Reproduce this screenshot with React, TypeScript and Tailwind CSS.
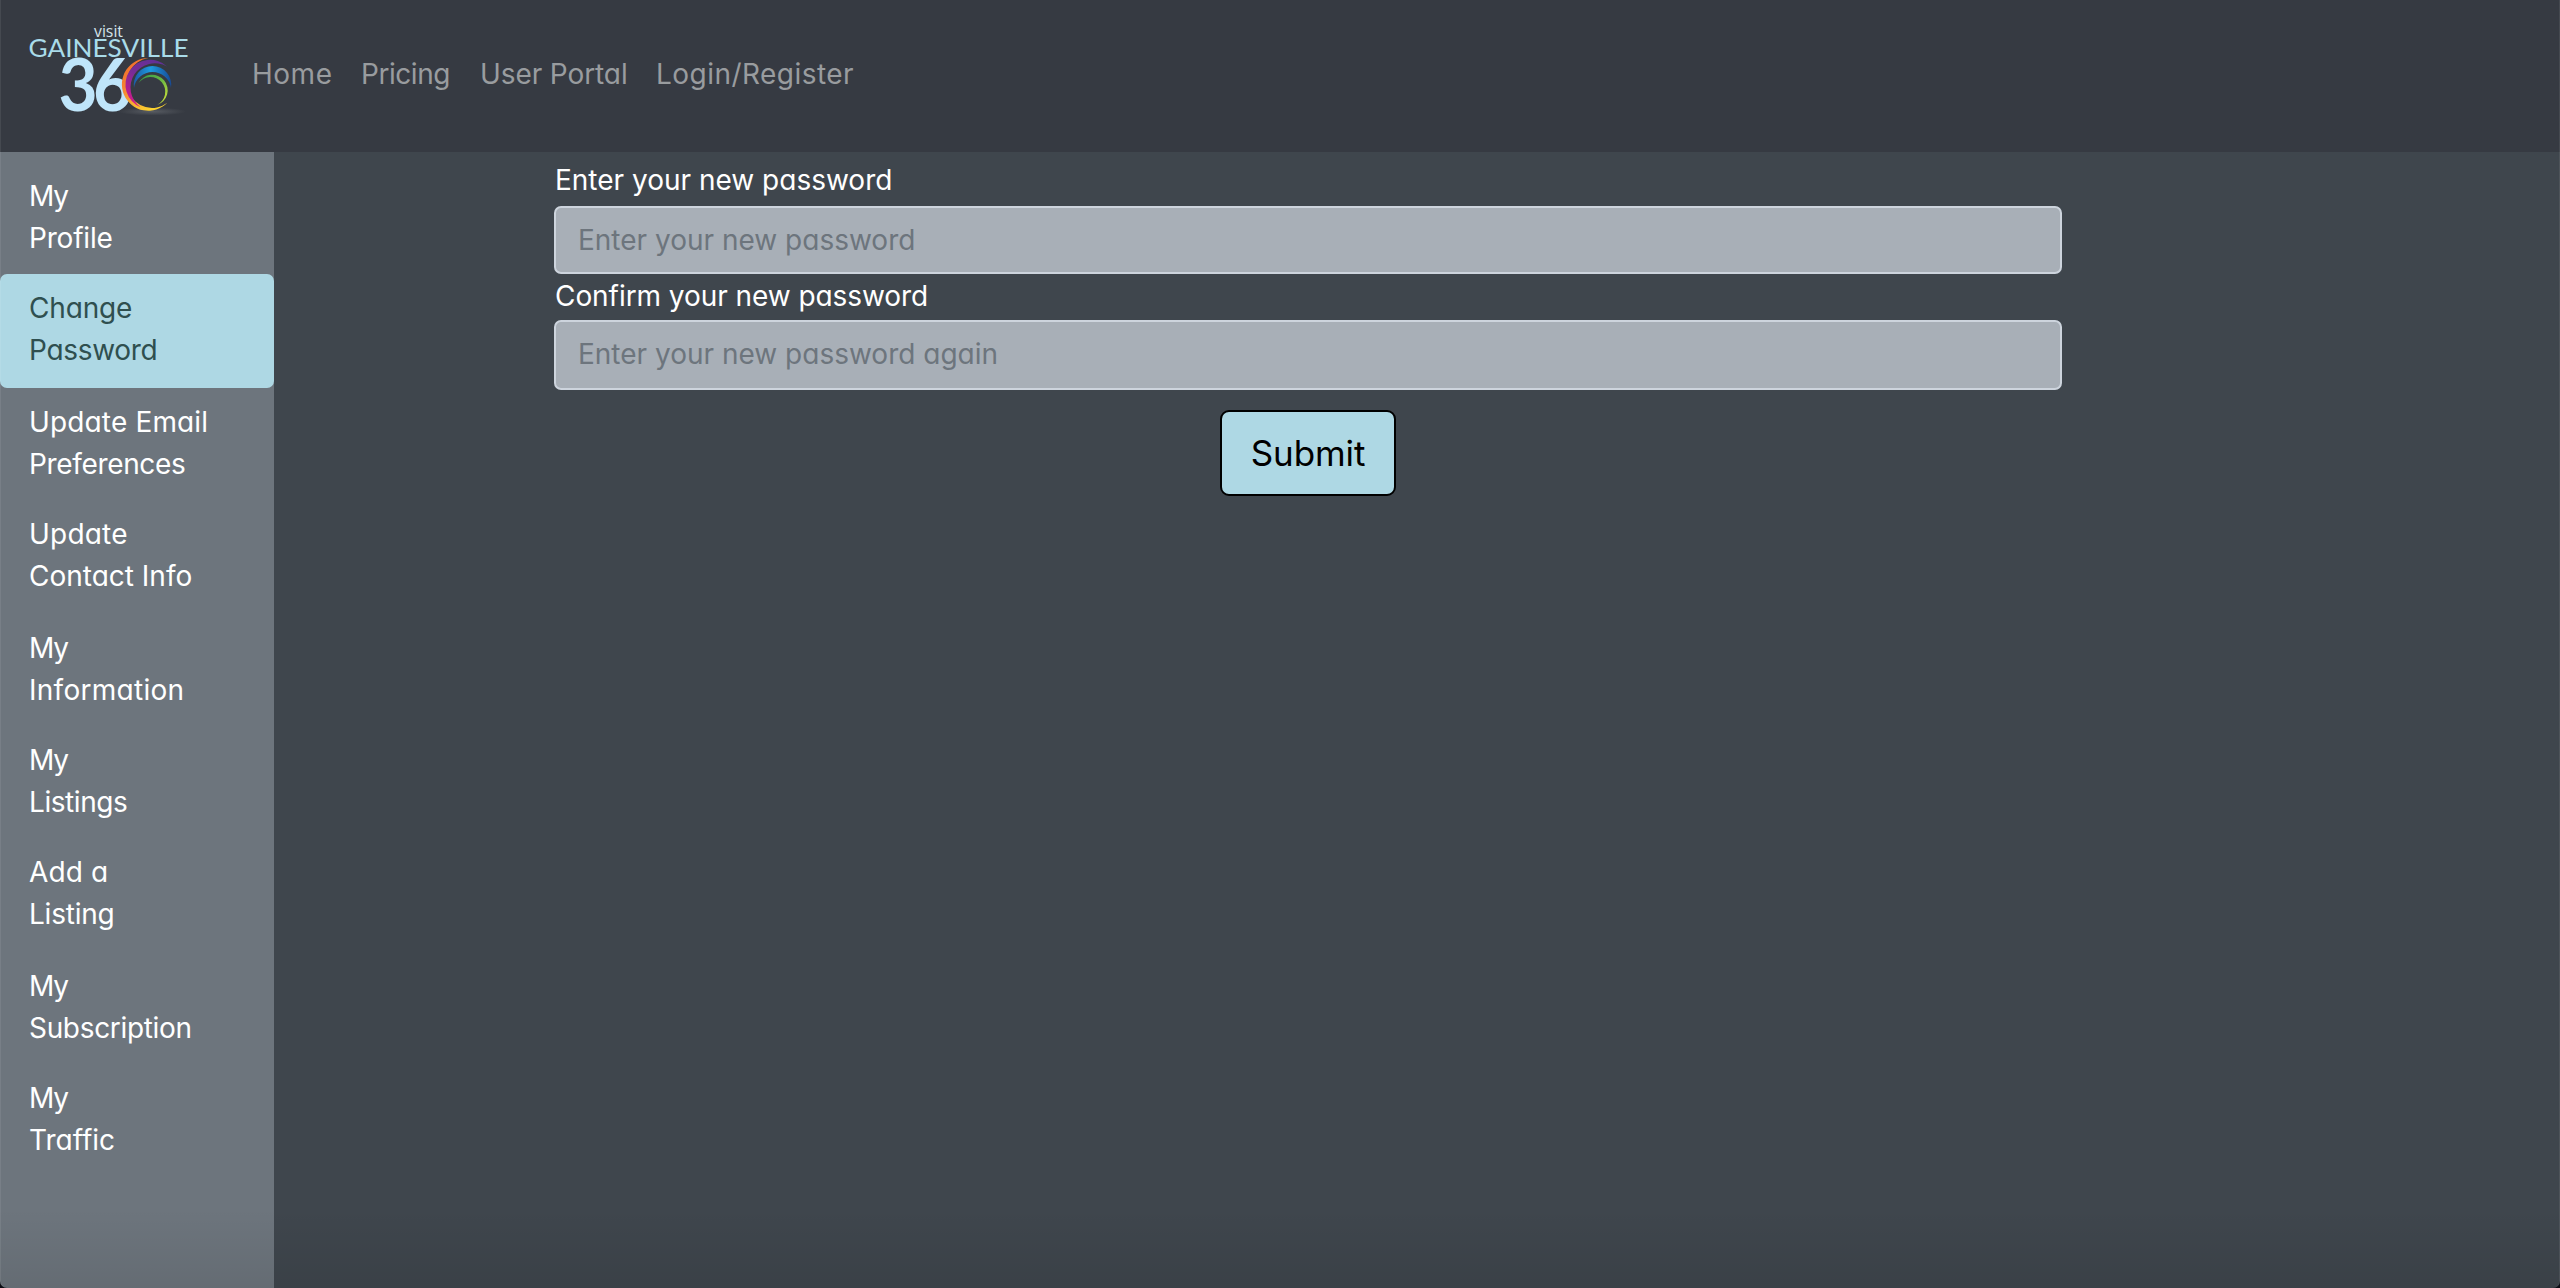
const sidebarLinks = [
  { lines: ["My", "Profile"], height: "h-[112px]", tracking: ["tracking-[-1.2px]", "tracking-[-0.2px]"] },
  { lines: ["Change", "Password"], height: "h-[114px]", tracking: ["tracking-[-0.15px]", "tracking-[-0.3px]"], active: true },
  { lines: ["Update Email", "Preferences"], height: "h-[112px]", tracking: ["tracking-[0.15px]", "tracking-[-0.34px]"] },
  { lines: ["Update", "Contact Info"], height: "h-[114px]", tracking: ["tracking-[0.2px]", "tracking-[0px]"] },
  { lines: ["My", "Information"], height: "h-[112px]", tracking: ["tracking-[-1.2px]", "tracking-[0.28px]"] },
  { lines: ["My", "Listings"], height: "h-[112px]", tracking: ["tracking-[-1.2px]", "tracking-[-0.44px]"] },
  { lines: ["Add a", "Listing"], height: "h-[114px]", tracking: ["tracking-[0.1px]", "tracking-[-0.23px]"] },
  { lines: ["My", "Subscription"], height: "h-[112px]", tracking: ["tracking-[-1.2px]", "tracking-[-0.33px]"] },
  { lines: ["My", "Traffic"], height: "h-[112px]", tracking: ["tracking-[-1.2px]", "tracking-[0px]"] },
];

const navLinks = [
  { label: "Home", style: "w-[109px] tracking-[0.5px]" },
  { label: "Pricing", style: "w-[119px] tracking-[-0.45px]" },
  { label: "User Portal", style: "w-[176px] tracking-[-0.1px]" },
  { label: "Login/Register", style: "tracking-[0.46px]" },
];

function Logo() {
  return (
    <svg viewBox="0 0 200 152" className="h-[152px] w-[200px] shrink-0" aria-label="Visit Gainesville 360">
      <defs>
        <linearGradient id="orange" x1="0" y1="0" x2="0.6" y2="1">
          <stop offset="0" stopColor="#f0642b" />
          <stop offset="0.5" stopColor="#f58a33" />
          <stop offset="1" stopColor="#fbd22f" />
        </linearGradient>
        <linearGradient id="purple" gradientUnits="userSpaceOnUse" x1="160" y1="60" x2="134" y2="107">
          <stop offset="0" stopColor="#5f3196" />
          <stop offset="0.45" stopColor="#7a2c96" />
          <stop offset="1" stopColor="#d8188c" />
        </linearGradient>
        <linearGradient id="blue" x1="0" y1="0" x2="1" y2="0">
          <stop offset="0" stopColor="#1d5aa5" />
          <stop offset="0.45" stopColor="#1d9be0" />
          <stop offset="1" stopColor="#174a96" />
        </linearGradient>
        <linearGradient id="green" x1="0" y1="0" x2="0.8" y2="1">
          <stop offset="0" stopColor="#2f9a48" />
          <stop offset="0.5" stopColor="#6cb843" />
          <stop offset="1" stopColor="#c9df3a" />
        </linearGradient>
        <radialGradient id="glow">
          <stop offset="0" stopColor="#8b8f94" stopOpacity="0.4" />
          <stop offset="1" stopColor="#8b8f94" stopOpacity="0" />
        </radialGradient>
      </defs>
      <text x="94" y="36.5" fontSize="17" fontFamily="'Open Sans', sans-serif" fill="#d5e3ea" textLength="29" lengthAdjust="spacingAndGlyphs">visit</text>
      <text x="28.5" y="57.3" fontSize="25" fontFamily="Lato, sans-serif" fill="#a9dbe9" textLength="160" lengthAdjust="spacingAndGlyphs">GAINESVILLE</text>
      <text x="58.5" y="111.3" fontSize="72" fontWeight="700" fontFamily="Lato, sans-serif" fill="#bfe5fa" letterSpacing="-5" textLength="69" lengthAdjust="spacingAndGlyphs">36</text>
      <ellipse cx="152" cy="111.5" rx="34" ry="4" fill="url(#glow)" />
      <path d="M148.3 58A26.4 26.4 0 1 0 167.3 102.7A25.1 25.1 0 1 1 148.3 58Z" fill="url(#orange)" />
      <path d="M167 66.5A24.7 24.7 0 1 0 140.5 107.3A24.36 24.36 0 0 1 167 66.5Z" fill="url(#purple)" />
      <path d="M134 88A18.78 18.78 0 1 1 171 88A18.7 18.7 0 0 0 134 88Z" fill="url(#blue)" />
      <path d="M138.5 83A15.5 15.5 0 1 1 157 105A14.8 14.8 0 1 0 138.5 83Z" fill="url(#green)" />
    </svg>
  );
}

export default function App() {
  return (
    <div className="relative flex h-[1288px] w-full flex-col overflow-hidden bg-[#3f464d] font-['Inter',sans-serif] text-[28px] leading-[42px] text-white [font-feature-settings:'cv11']">
      <header className="flex h-[152px] shrink-0 items-center bg-[#363a42]">
        <Logo />
        <nav className="mb-1 ml-[52px] flex text-[#999c9f]">
          {navLinks.map((link) => (
            <a key={link.label} href="#" className={`whitespace-nowrap ${link.style}`}>
              {link.label}
            </a>
          ))}
        </nav>
      </header>

      <div className="flex min-h-0 flex-1">
        <aside className="w-[274px] shrink-0 bg-[#6d757d] pt-[10px]">
          {sidebarLinks.map((link) => (
            <a
              key={link.lines.join(" ")}
              href="#"
              className={`flex flex-col rounded-[7px] pt-[13px] pl-[29px] whitespace-nowrap ${link.height} ${link.active ? "bg-[#aed8e4] text-[#2f4f4f]" : ""}`}
            >
              {link.lines.map((line, i) => (
                <span key={line} className={link.tracking[i]}>
                  {line}
                </span>
              ))}
            </a>
          ))}
        </aside>

        <main className="flex-1 pl-[280px]">
          <form className="flex w-[1508px] flex-col">
            <label htmlFor="new-password" className="mt-[7px] pl-[1px]">
              Enter your new password
            </label>
            <input
              id="new-password"
              type="password"
              placeholder="Enter your new password"
              className="mt-[5px] h-[68px] rounded-[7px] border-2 border-[#cdd4dd] bg-[#a8afb7] px-[22px] placeholder:text-[#6d757d] placeholder:opacity-100"
            />
            <label htmlFor="confirm-password" className="mt-px pl-[1px] tracking-[-0.06px]">
              Confirm your new password
            </label>
            <input
              id="confirm-password"
              type="password"
              placeholder="Enter your new password again"
              className="mt-[3px] h-[70px] rounded-[7px] border-2 border-[#cdd4dd] bg-[#a8afb7] px-[22px] pb-[2px] placeholder:text-[#6d757d] placeholder:opacity-100"
            />
            <button
              type="button"
              className="mt-5 flex h-[86px] w-[176px] items-center justify-center self-center rounded-[9px] border-2 border-black bg-[#aed8e4] text-[35px] tracking-[-0.1px] text-black"
            >
              Submit
            </button>
          </form>
        </main>
      </div>

      <div className="pointer-events-none absolute inset-x-0 bottom-0 h-[80px] bg-linear-to-b from-transparent to-black/8" />
      <div className="pointer-events-none absolute inset-0 rounded-b-[7px] border-x border-white/8 shadow-[0_0_0_8px_#0b0d14]" />
    </div>
  );
}
